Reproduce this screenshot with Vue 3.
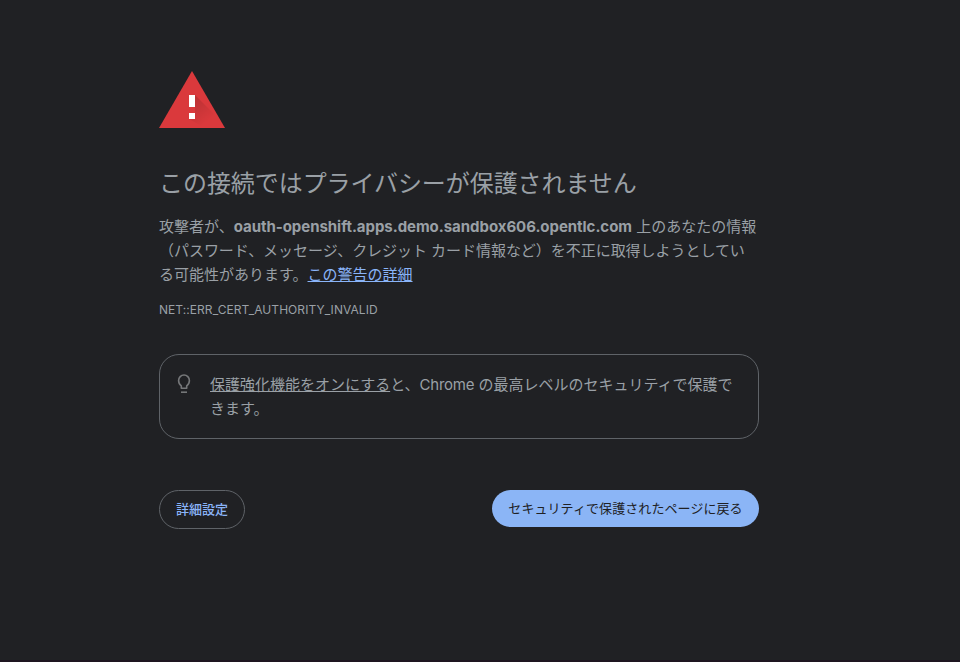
<script setup>
const host = 'oauth-openshift.apps.demo.sandbox606.opentlc.com'
</script>

<template>
  <div class="page">
    <main class="content">
      <svg class="warning" width="66" height="57" viewBox="0 0 66 57" aria-hidden="true">
        <defs>
          <linearGradient id="shade" x1="33" y1="24" x2="52" y2="48" gradientUnits="userSpaceOnUse">
            <stop offset="0" stop-color="#000" stop-opacity=".16" />
            <stop offset="1" stop-color="#000" stop-opacity="0" />
          </linearGradient>
        </defs>
        <path d="M33 0 66 57H0Z" fill="#da393c" />
        <path d="M36 24 55 43 63 57H46L30 48 36 42Z" fill="url(#shade)" />
        <path d="M30 24h6v12h-6zM30 42h6v6h-6z" fill="#fff" />
      </svg>
      <h1>この接続ではプライバシーが保護されません</h1>
      <p class="message">
        <span class="line">攻撃者が、<strong>{{ host }}</strong> 上のあなたの情報</span>
        <span class="line second">（パスワード、メッセージ、クレジット カード情報など）を不正に取得しようとしてい</span>
        <span class="line">る可能性があります。<a class="more">この警告の詳細</a></span>
      </p>
      <div class="code">NET::ERR_CERT_AUTHORITY_INVALID</div>
      <section class="tip">
        <svg class="bulb" width="24" height="24" viewBox="0 0 24 24" aria-hidden="true">
          <path
            d="M9.3 16.3v-2.3C7.6 12.8 6.6 11 6.6 8.6a5.4 5.6 0 0 1 10.8 0c0 2.4-1 4.2-2.7 5.4v2.3Z"
            fill="none" stroke="#757779" stroke-width="1.6" stroke-linejoin="round"
          />
          <path d="M9 20.2h6" stroke="#757779" stroke-width="1.6" />
        </svg>
        <p>
          <span class="line"><a>保護強化機能をオンにする</a>と、<span class="latin">Chrome</span> の最高レベルのセキュリティで保護で</span>
          <span class="line">きます。</span>
        </p>
      </section>
      <div class="actions">
        <button class="details">詳細設定</button>
        <button class="back">セキュリティで保護されたページに戻る</button>
      </div>
    </main>
  </div>
</template>

<style>
body {
  margin: 0;
  background: #202124;
}
</style>

<style scoped>
.page {
  box-sizing: border-box;
  height: 662px;
  overflow: hidden;
  padding: 71px 0 0 159px;
  background: #202124;
  border-bottom: 2px solid #1e1520;
  color: #9aa0a6;
  font-family: Inter, "Noto Sans CJK JP", sans-serif;
  font-size: 15px;
  line-height: 24px;
}
.content {
  width: 600px;
}
.warning {
  display: block;
}
h1 {
  margin: 41px 0 0;
  font-size: 24px;
  font-weight: 400;
  letter-spacing: -0.06px;
  line-height: 29px;
  white-space: nowrap;
}
p {
  margin: 0;
}
.message {
  margin-top: 17px;
}
.line {
  display: block;
  white-space: nowrap;
}
.second {
  letter-spacing: -0.04px;
}
strong {
  font-weight: 700;
  letter-spacing: -0.045px;
}
a {
  text-decoration: underline;
}
.more {
  color: #8ab4f8;
}
.code {
  margin-top: 14px;
  font-size: 12px;
  letter-spacing: 0.06px;
  line-height: 18px;
}
.tip {
  box-sizing: border-box;
  display: flex;
  gap: 14px;
  height: 85px;
  margin-top: 35px;
  padding: 17px 12px 0;
  border: 1px solid #5f6368;
  border-radius: 20px;
}
.tip p {
  margin-top: 1px;
}
.latin {
  letter-spacing: -0.25px;
}
.actions {
  display: flex;
  justify-content: space-between;
  align-items: flex-start;
  margin-top: 51px;
}
button {
  box-sizing: border-box;
  padding: 0 0 2px;
  border: 0;
  border-radius: 20px;
  font-family: inherit;
  font-size: 13px;
  line-height: 18px;
  white-space: nowrap;
}
.details {
  width: 86px;
  height: 39px;
  border: 1px solid #5f6368;
  background: transparent;
  color: #8ab4f8;
  font-weight: 500;
}
.back {
  width: 267px;
  height: 37px;
  background: #8bb5f6;
  color: #202124;
  letter-spacing: 0.08px;
}
</style>
